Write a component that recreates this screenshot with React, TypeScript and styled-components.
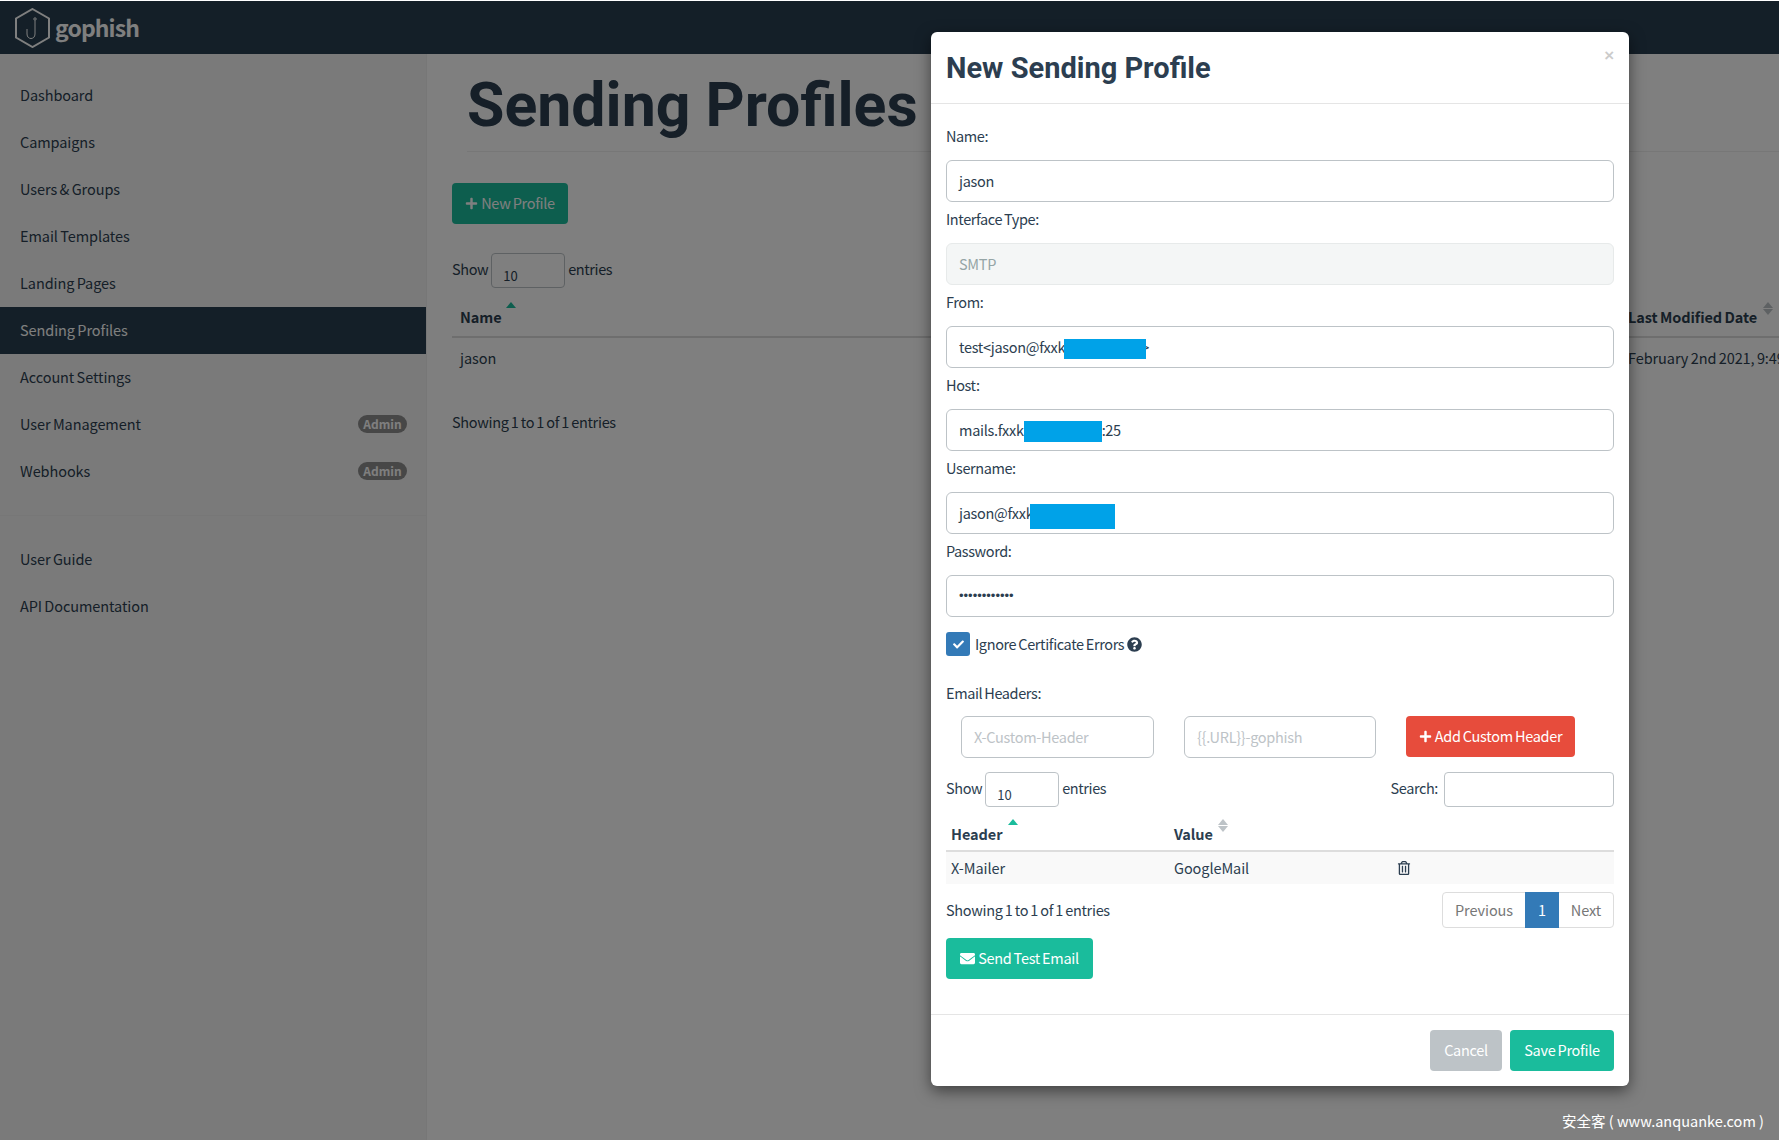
import React from 'react';
import styled, { createGlobalStyle } from 'styled-components';
import { FaCheck, FaEnvelope, FaPlus, FaQuestionCircle, FaRegTrashAlt } from 'react-icons/fa';

const GlobalStyle = createGlobalStyle`
html, body {
  margin: 0;
  padding: 0;
  height: 100%;
  overflow: hidden;
  background: white;
}
* { box-sizing: border-box; }
body {
  font-family: "Noto Sans CJK SC", "Source Sans Pro", "Open Sans", sans-serif;
  font-size: 14.5px;
  letter-spacing: -0.08px;
  word-spacing: -0.8px;
  line-height: 20px;
  color: #2c3e50;
}
`
const Page = styled.div`
height: 1140px;
padding-top: 1px;
display: flex;
flex-direction: column;
position: relative;
overflow: hidden;
`
const Navbar = styled.div`
height: 53px;
flex: none;
background: #283f50;
display: flex;
align-items: center;
padding-left: 15px;
gap: 5px;
`
const Brand = styled.span`
font-size: 23px;
font-weight: 700;
letter-spacing: -0.9px;
color: #fff;
margin-bottom: 2px;
`
const Body = styled.div`
flex: 1;
display: flex;
background: white;
min-height: 0;
`
const Sidebar = styled.div`
width: 427px;
flex: none;
padding-top: 18px;
background: #f5f5f5;
border-right: 1px solid #eee;
`
const NavItem = styled.div<{ $active?: boolean }>`
height: 47px;
padding: 0 19px 1px 20px;
display: flex;
align-items: center;
justify-content: space-between;
color: ${p => (p.$active ? '#fff' : '#2c3e50')};
background: ${p => (p.$active ? '#283f50' : 'transparent')};
`
const Badge = styled.span`
height: 18px;
width: 49px;
border-radius: 9px;
background: #8f8f8f;
color: #fff;
font-size: 12px;
font-weight: 700;
letter-spacing: 0;
display: flex;
align-items: center;
justify-content: center;
`
const SideRule = styled.div`
height: 1px;
background: #eee;
margin: 20px 0 20px;
`
const Main = styled.div`
flex: 1;
min-width: 0;
padding: 0 0 0 25px;
overflow: hidden;
`
const Title = styled.h1`
margin: 0 0 31px 15px;
padding: 19px 0 9px;
height: 98px;
font-family: Roboto, sans-serif;
font-size: 60.8px;
line-height: 66px;
font-weight: 700;
letter-spacing: 0;
word-spacing: 0;
white-space: nowrap;
border-bottom: 1px solid #eee;
color: #2c3e50;
`
const Btn = styled.div<{ $bg: string; $w: number; $h?: number }>`
width: ${p => p.$w}px;
height: ${p => p.$h || 41}px;
flex: none;
padding-bottom: 1px;
background: ${p => p.$bg};
border-radius: 4px;
color: #fff;
letter-spacing: -0.3px;
display: flex;
align-items: center;
justify-content: center;
gap: 3px;
svg { font-size: 13px; }
`
const SendBtn = styled(Btn)`
svg { font-size: 15px; }
`
const ShowRow = styled.div`
display: flex;
align-items: flex-start;
gap: 3px;
`
const ShowLabel = styled.span`
margin-top: 6px;
letter-spacing: -0.4px;
`
const FakeSelect = styled.div`
width: 74px;
height: 35px;
border: 1px solid #bdc3c7;
border-radius: 4px;
background: #fff;
font-size: 13px;
letter-spacing: 0;
padding: 12px 0 0 11px;
line-height: 20px;
`
const TopShow = styled(ShowRow)`
margin-top: 29px;
`
const PageHead = styled.div`
display: grid;
grid-template-columns: 1168px 200px;
height: 50px;
width: 1400px;
align-items: end;
border-bottom: 2px solid #ddd;
font-weight: 700;
padding-bottom: 9px;
`
const PageRow = styled.div`
display: grid;
grid-template-columns: 1168px 400px;
height: 40px;
width: 1400px;
align-items: center;
`
const Cell = styled.div`
position: relative;
padding-left: 8px;
white-space: nowrap;
`
const Sort = styled.span<{ $x: number; $dir: 'up' | 'down'; $on?: boolean }>`
position: absolute;
left: ${p => p.$x}px;
top: ${p => (p.$dir === 'up' ? -5 : 2)}px;
width: 0;
height: 0;
border-left: 5.5px solid transparent;
border-right: 5.5px solid transparent;
${p => (p.$dir === 'up' ? 'border-bottom' : 'border-top')}: 6px solid ${p => (p.$on ? '#1abc9c' : '#bdc3c7')};
`
const EntryInfo = styled.span`
letter-spacing: -0.3px;
`
const Info = styled.div`
margin-top: 34px;
`
const Backdrop = styled.div`
position: absolute;
inset: 1px 0 0 0;
background: rgba(0, 0, 0, 0.5);
`
const Modal = styled.div`
position: absolute;
left: 931px;
top: 32px;
width: 698px;
height: 1054px;
background: #fff;
border-radius: 6px;
box-shadow: 0 5px 15px rgba(0, 0, 0, 0.5);
display: flex;
flex-direction: column;
`
const ModalHeader = styled.div`
height: 72px;
flex: none;
padding: 0 15px;
border-bottom: 1px solid #e5e5e5;
display: flex;
align-items: center;
justify-content: space-between;
`
const ModalTitle = styled.h4`
margin: 0;
font-family: Roboto, sans-serif;
font-size: 29px;
font-weight: 700;
letter-spacing: 0;
word-spacing: 0;
color: #2c3e50;
`
const Close = styled.span`
font-family: "Liberation Sans", sans-serif;
font-size: 17px;
font-weight: 700;
color: #000;
opacity: 0.2;
margin: -24px 0 0 0;
`
const ModalBody = styled.div`
flex: 1;
padding: 15px 15px 0;
`
const Label = styled.div`
height: 20px;
margin: 7px 0 14px;
letter-spacing: -0.4px;
`
const InputBox = styled.div<{ $disabled?: boolean }>`
height: 42px;
border: 1px solid #bdc3c7;
border-radius: 6px;
padding: 0 12px;
display: flex;
align-items: center;
white-space: pre;
letter-spacing: -0.3px;
background: ${p => (p.$disabled ? '#f4f6f6' : '#fff')};
color: ${p => (p.$disabled ? '#95a5a6' : '#2c3e50')};
border-color: ${p => (p.$disabled ? '#e7eaea' : '#bdc3c7')};
`
const Redact = styled.span<{ $w: number; $h: number; $shift?: number; $pull?: number }>`
position: relative;
z-index: 1;
display: inline-block;
width: ${p => p.$w}px;
height: ${p => p.$h}px;
background: #00a2e8;
margin-top: ${p => p.$shift || 0}px;
margin-left: ${p => -(p.$pull || 0)}px;
`
const Hidden = styled.span`
margin-left: -5px;
`
const Dots = styled.span`
font-family: "Liberation Sans", sans-serif;
font-size: 13px;
letter-spacing: 0;
`
const CheckRow = styled.div`
display: flex;
align-items: center;
margin-top: 15px;
height: 24px;
`
const CheckBox = styled.span`
width: 24px;
height: 24px;
margin-right: 5px;
border-radius: 3px;
background: #337ab7;
color: #fff;
display: flex;
align-items: center;
justify-content: center;
font-size: 11px;
`
const CheckText = styled.span`
letter-spacing: -0.38px;
`
const Help = styled(FaQuestionCircle)`
margin-left: 3px;
font-size: 15px;
`
const HeadersLabel = styled.div`
margin-top: 27px;
height: 20px;
letter-spacing: -0.4px;
`
const HeaderForm = styled.div`
display: flex;
margin: 13px 0 0 15px;
gap: 30px;
`
const Ghost = styled(InputBox)<{ $w: number }>`
width: ${p => p.$w}px;
flex: none;
color: #bdc3c7;
`
const ToolRow = styled.div`
display: flex;
justify-content: space-between;
margin-top: 14px;
`
const SearchBox = styled.div`
width: 170px;
height: 35px;
border: 1px solid #bdc3c7;
border-radius: 4px;
`
const SearchWrap = styled.div`
display: flex;
align-items: flex-start;
gap: 6px;
`
const HeadRow = styled.div`
display: grid;
grid-template-columns: 223px 223px 1fr;
height: 45px;
padding-bottom: 6px;
align-items: end;
font-weight: 700;
border-bottom: 2px solid #ddd;
`
const DataRow = styled.div`
display: grid;
grid-template-columns: 223px 223px 1fr;
height: 32px;
align-items: center;
background: #f9f9f9;
`
const DataCell = styled.div`
position: relative;
padding-left: 5px;
`
const Trash = styled(FaRegTrashAlt)`
color: #2c3e50;
font-size: 14px;
margin-top: 3px;
`
const TableFoot = styled.div`
display: flex;
justify-content: space-between;
align-items: center;
margin-top: 8px;
`
const Pager = styled.div`
display: flex;
height: 36px;
border: 1px solid #ddd;
border-radius: 4px;
`
const PageBtn = styled.div<{ $active?: boolean; $w: number }>`
width: ${p => p.$w}px;
display: flex;
align-items: center;
justify-content: center;
color: ${p => (p.$active ? '#fff' : '#777')};
background: ${p => (p.$active ? '#337ab7' : 'transparent')};
margin: ${p => (p.$active ? '-1px 0' : '0')};
`
const SendWrap = styled.div`
margin-top: 10px;
`
const ModalFooter = styled.div`
height: 72px;
flex: none;
border-top: 1px solid #e5e5e5;
padding: 15px;
display: flex;
justify-content: flex-end;
gap: 8px;
`
const Watermark = styled.div`
position: absolute;
right: 15px;
bottom: 9px;
color: #fff;
font-size: 14.5px;
word-spacing: 0;
letter-spacing: 0;
`

const sideItems = ['Dashboard', 'Campaigns', 'Users & Groups', 'Email Templates', 'Landing Pages', 'Sending Profiles', 'Account Settings']

function Logo() {
  return (
    <svg width="35" height="40" viewBox="0 0 35 40" fill="none" stroke="#fff">
      <path d="M17.5 1 L34 10.5 V29.5 L17.5 39 L1 29.5 V10.5 Z" strokeWidth="2" />
      <circle cx="20" cy="11" r="1.2" strokeWidth="1" />
      <path d="M20 12.5 V26 C20 32 12 32 12 26 V21" strokeWidth="1" />
    </svg>
  )
}

export default function App() {
  return (
    <Page>
      <GlobalStyle />
      <Navbar>
        <Logo />
        <Brand>gophish</Brand>
      </Navbar>
      <Body>
        <Sidebar>
          {sideItems.map(name => (
            <NavItem key={name} $active={name === 'Sending Profiles'}>{name}</NavItem>
          ))}
          <NavItem>User Management<Badge>Admin</Badge></NavItem>
          <NavItem>Webhooks<Badge>Admin</Badge></NavItem>
          <SideRule />
          <NavItem>User Guide</NavItem>
          <NavItem>API Documentation</NavItem>
        </Sidebar>
        <Main>
          <Title>Sending Profiles</Title>
          <Btn $bg="#1abc9c" $w={116}><FaPlus />New Profile</Btn>
          <TopShow>
            <ShowLabel>Show</ShowLabel>
            <FakeSelect>10</FakeSelect>
            <ShowLabel>entries</ShowLabel>
          </TopShow>
          <PageHead>
            <Cell>Name<Sort $x={54} $dir="up" $on /></Cell>
            <Cell>Last Modified Date<Sort $x={143} $dir="up" /><Sort $x={143} $dir="down" /></Cell>
          </PageHead>
          <PageRow>
            <Cell>jason</Cell>
            <Cell>February 2nd 2021, 9:49:30 am</Cell>
          </PageRow>
          <Info><EntryInfo>Showing 1 to 1 of 1 entries</EntryInfo></Info>
        </Main>
      </Body>
      <Backdrop />
      <Modal>
        <ModalHeader>
          <ModalTitle>New Sending Profile</ModalTitle>
          <Close>×</Close>
        </ModalHeader>
        <ModalBody>
          <Label>Name:</Label>
          <InputBox>jason</InputBox>
          <Label>Interface Type:</Label>
          <InputBox $disabled>SMTP</InputBox>
          <Label>From:</Label>
          <InputBox>test&lt;jason@fxxk<Redact $w={82} $h={20} $shift={3} $pull={1} /><Hidden>&gt;</Hidden></InputBox>
          <Label>Host:</Label>
          <InputBox>mails.fxxk<Redact $w={78} $h={21} $shift={3} />:25</InputBox>
          <Label>Username:</Label>
          <InputBox>jason@fxxk<Redact $w={85} $h={25} $shift={6} $pull={3} /></InputBox>
          <Label>Password:</Label>
          <InputBox><Dots>••••••••••••</Dots></InputBox>
          <CheckRow>
            <CheckBox><FaCheck /></CheckBox>
            <CheckText>Ignore Certificate Errors</CheckText>
            <Help />
          </CheckRow>
          <HeadersLabel>Email Headers:</HeadersLabel>
          <HeaderForm>
            <Ghost $w={193}>X-Custom-Header</Ghost>
            <Ghost $w={192}>{'{{.URL}}-gophish'}</Ghost>
            <Btn $bg="#e74c3c" $w={169}><FaPlus />Add Custom Header</Btn>
          </HeaderForm>
          <ToolRow>
            <ShowRow>
              <ShowLabel>Show</ShowLabel>
              <FakeSelect>10</FakeSelect>
              <ShowLabel>entries</ShowLabel>
            </ShowRow>
            <SearchWrap>
              <ShowLabel>Search:</ShowLabel>
              <SearchBox />
            </SearchWrap>
          </ToolRow>
          <HeadRow>
            <DataCell>Header<Sort $x={62} $dir="up" $on /></DataCell>
            <DataCell>Value<Sort $x={49} $dir="up" /><Sort $x={49} $dir="down" /></DataCell>
            <DataCell />
          </HeadRow>
          <DataRow>
            <DataCell>X-Mailer</DataCell>
            <DataCell>GoogleMail</DataCell>
            <DataCell><Trash /></DataCell>
          </DataRow>
          <TableFoot>
            <EntryInfo>Showing 1 to 1 of 1 entries</EntryInfo>
            <Pager>
              <PageBtn $w={82}>Previous</PageBtn>
              <PageBtn $w={34} $active>1</PageBtn>
              <PageBtn $w={54}>Next</PageBtn>
            </Pager>
          </TableFoot>
          <SendWrap>
            <SendBtn $bg="#1abc9c" $w={147}><FaEnvelope />Send Test Email</SendBtn>
          </SendWrap>
        </ModalBody>
        <ModalFooter>
          <Btn $bg="#bdc3c7" $w={72}>Cancel</Btn>
          <Btn $bg="#1abc9c" $w={104}>Save Profile</Btn>
        </ModalFooter>
      </Modal>
      <Watermark>安全客 ( www.anquanke.com )</Watermark>
    </Page>
  );
}
